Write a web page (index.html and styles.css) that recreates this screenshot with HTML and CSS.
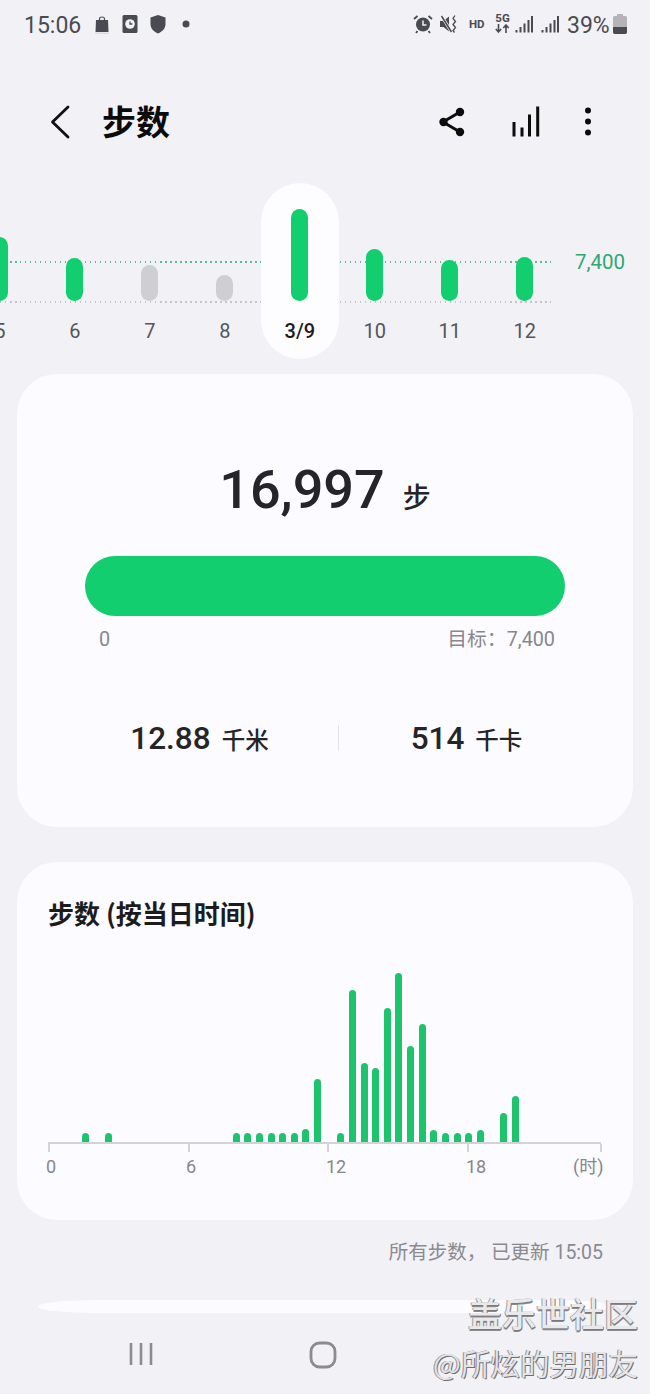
FILE: index.html
```html
<!DOCTYPE html>
<html lang="zh-CN">
<head>
<meta charset="utf-8">
<title>步数</title>
<link rel="stylesheet" href="styles.css">
</head>
<body>
<div class="screen">
  <header class="status">
    <div class="status-left">
      <span class="time">15:06</span>
      <svg class="s-cell" viewBox="0 0 28 20"><path d="M8 6h12l.5 12h-13z" fill="#4a4a52"/><path d="M11.5 6V5a2.500 2 0 0 1 5 0v1" fill="none" stroke="#4a4a52" stroke-width="1.200"/><path d="M7 19.300h14" stroke="#d6d6da" stroke-width="1.200"/></svg>
      <svg class="s-cell" viewBox="0 0 28 20"><rect x="6.500" y="1" width="15" height="18" rx="1.500" fill="#4a4a52"/><circle cx="14" cy="10" r="4.800" fill="#f1f1f6"/><path d="M14 7.500V10h2.400" fill="none" stroke="#4a4a52" stroke-width="1.300"/></svg>
      <svg class="s-cell" viewBox="0 0 28 20"><path d="M14 1l7.500 2.500V10c0 4.500-3 7.500-7.500 9.500C9.500 17.500 6.500 14.500 6.500 10V3.500z" fill="#4a4a52"/></svg>
      <svg class="s-cell" viewBox="0 0 28 20"><circle cx="14" cy="10" r="3.500" fill="#4a4a52"/></svg>
    </div>
    <div class="status-right">
      <svg class="s-alarm" viewBox="0 0 20 20"><circle cx="10" cy="10.500" r="7" fill="#4a4a52"/><path d="M10 6.500v4.500h3.500" fill="none" stroke="#f1f1f6" stroke-width="1.500"/><path d="M1 5l3.500-3M19 5l-3.500-3M4.500 17l-1.500 2M15.500 17l1.500 2" stroke="#4a4a52" stroke-width="1.800" fill="none"/></svg>
      <svg class="s-mute" viewBox="0 0 18 20"><path d="M0 7h3.500L9 2.500v15L3.500 13H0z" fill="#4a4a52"/><path d="M1 1l10.500 17" stroke="#f1f1f6" stroke-width="3"/><path d="M1.500 2l10 16" stroke="#4a4a52" stroke-width="1.500"/><path d="M15 1.500l-2 3 2.500 3-2.500 3 2.500 3-2.500 3 1.500 2" fill="none" stroke="#4a4a52" stroke-width="1.300"/></svg>
      <span class="s-hd">HD</span>
      <span class="s-net"><span class="s-5g">5G</span><svg class="s-arrows" viewBox="0 0 15 9"><path d="M3.500 0v7.500M.8 5l2.700 3 2.700-3M11 9V1.500M8.300 4L11 1l2.700 3" fill="none" stroke="#4a4a52" stroke-width="1.600"/></svg></span>
      <svg class="s-signal" viewBox="0 0 18 18"><path d="M1.500 15v2.500M5.500 12v5.500M9.500 8.500v9M13.500 5v12.500M17 1v16.500" stroke="#4a4a52" stroke-width="2"/></svg>
      <svg class="s-signal s-signal-b" viewBox="0 0 18 18"><path d="M1.500 15v2.500M5.500 12v5.500M9.500 8.500v9M13.500 5v12.500M17 1v16.500" stroke="#4a4a52" stroke-width="2"/></svg>
      <span class="pct">39%</span>
      <svg class="s-batt" viewBox="0 0 14 20"><path d="M4 0h6v2h2.500A1.500 1.500 0 0 1 14 3.500V18a2 2 0 0 1-2 2H2a2 2 0 0 1-2-2V3.500A1.500 1.500 0 0 1 1.500 2H4z" fill="#b4b4b8"/><path d="M0 13h14v5a2 2 0 0 1-2 2H2a2 2 0 0 1-2-2z" fill="#4a4a52"/></svg>
    </div>
  </header>

  <nav class="appbar">
    <svg class="ic-back" viewBox="0 0 24 40"><path d="M20 5L4.500 20 20 35" fill="none" stroke="#111" stroke-width="2.800" stroke-linecap="round" stroke-linejoin="round"/></svg>
    <h1 class="title">步数</h1>
    <svg class="ic-share" viewBox="0 0 30 40"><path d="M23 10L6 20l17 10" fill="none" stroke="#0c0c0c" stroke-width="3"/><circle cx="23" cy="10" r="4.200" fill="#0c0c0c"/><circle cx="6.500" cy="20" r="4.200" fill="#0c0c0c"/><circle cx="23" cy="30" r="4.200" fill="#0c0c0c"/></svg>
    <svg class="ic-bars" viewBox="0 0 32 40"><path d="M4 20v14.500M12 25.500v9M19.500 12.500v22M27.700 4.500v30" fill="none" stroke="#0c0c0c" stroke-width="3"/></svg>
    <svg class="ic-more" viewBox="0 0 20 40"><circle cx="10" cy="8.500" r="3" fill="#0c0c0c"/><circle cx="10" cy="19.500" r="3" fill="#0c0c0c"/><circle cx="10" cy="30.500" r="3" fill="#0c0c0c"/></svg>
  </nav>

  <section class="strip">
    <div class="goal-line"></div>
    <div class="base-line"></div>
    <span class="goal-label">7,400</span>
    <div class="days">
      <div class="day"><div class="day-plot"><div class="day-bar" style="height:64px"></div></div><span class="day-label">5</span></div>
      <div class="day"><div class="day-plot"><div class="day-bar" style="height:43px"></div></div><span class="day-label">6</span></div>
      <div class="day"><div class="day-plot"><div class="day-bar day-bar-off" style="height:36px"></div></div><span class="day-label">7</span></div>
      <div class="day"><div class="day-plot"><div class="day-bar day-bar-off" style="height:26px"></div></div><span class="day-label">8</span></div>
      <div class="day day-active"><div class="day-plot"><div class="day-bar" style="height:92px"></div></div><span class="day-label">3/9</span></div>
      <div class="day"><div class="day-plot"><div class="day-bar" style="height:52px"></div></div><span class="day-label">10</span></div>
      <div class="day"><div class="day-plot"><div class="day-bar" style="height:41px"></div></div><span class="day-label">11</span></div>
      <div class="day"><div class="day-plot"><div class="day-bar" style="height:44px"></div></div><span class="day-label">12</span></div>
    </div>
  </section>

  <main class="card card-summary">
    <div class="total"><span class="total-num">16,997</span><span class="total-unit">步</span></div>
    <div class="progress"></div>
    <div class="range"><span>0</span><span>目标：7,400</span></div>
    <div class="stats">
      <div class="stat"><span class="stat-num">12.88</span><span class="stat-unit">千米</span></div>
      <div class="stat-div"></div>
      <div class="stat"><span class="stat-num">514</span><span class="stat-unit">千卡</span></div>
    </div>
  </main>

  <section class="card card-hours">
    <h2 class="hours-title">步数 (按当日时间)</h2>
    <div class="hours-plot">
      <i class="hb"></i><i class="hb"></i><i class="hb" style="height:9px"></i><i class="hb"></i><i class="hb" style="height:9px"></i><i class="hb"></i><i class="hb"></i><i class="hb"></i><i class="hb"></i><i class="hb"></i><i class="hb"></i><i class="hb"></i><i class="hb"></i><i class="hb"></i><i class="hb"></i>
      <i class="hb" style="height:9px"></i><i class="hb" style="height:9px"></i><i class="hb" style="height:9px"></i><i class="hb" style="height:9px"></i><i class="hb" style="height:9px"></i><i class="hb" style="height:9px"></i><i class="hb" style="height:13px"></i><i class="hb" style="height:63px"></i><i class="hb"></i><i class="hb" style="height:9px"></i><i class="hb" style="height:152px"></i><i class="hb" style="height:79px"></i><i class="hb" style="height:74px"></i><i class="hb" style="height:134px"></i><i class="hb" style="height:169px"></i><i class="hb" style="height:96px"></i><i class="hb" style="height:118px"></i><i class="hb" style="height:12px"></i><i class="hb" style="height:9px"></i><i class="hb" style="height:9px"></i><i class="hb" style="height:9px"></i><i class="hb" style="height:12px"></i><i class="hb"></i><i class="hb" style="height:29px"></i><i class="hb" style="height:46px"></i>
    </div>
    <div class="axis">
      <div class="tick"></div><div class="tick"></div><div class="tick"></div><div class="tick"></div><div class="tick tick-end"></div>
    </div>
    <div class="axis-labels">
      <span class="al al-0">0</span><span class="al al-6">6</span><span class="al al-12">12</span><span class="al al-18">18</span><span class="al al-h">(时)</span>
    </div>
  </section>

  <p class="updated">所有步数， 已更新 15:05</p>
  <div class="sliver"></div>

  <footer class="navbar">
    <svg class="nav-recent" viewBox="0 0 24 24"><path d="M2 1v22M12 1v22M22 1v22" stroke="#8b8b90" stroke-width="2.600" fill="none"/></svg>
    <svg class="nav-home" viewBox="0 0 28 28"><rect x="2" y="2" width="24" height="24" rx="8.500" fill="none" stroke="#8b8b90" stroke-width="2.800"/></svg>
  </footer>

  <div class="watermark">
    <div class="wm-a">盖乐世社区</div>
    <div class="wm-b">@所炫的男朋友</div>
  </div>
</div>
</body>
</html>
```

FILE: styles.css
```css
* { box-sizing: border-box; }
html, body { margin: 0; padding: 0; }
body { background: #f1f1f6; font-family: Roboto, "Noto Sans CJK SC", sans-serif; }
.screen { position: relative; width: 650px; height: 1394px; overflow: hidden; background: #f1f1f6; }

.status { height: 50px; display: flex; align-items: center; justify-content: space-between; padding: 0 23px 0 24px; color: #4a4a52; }
.status-left, .status-right { display: flex; align-items: center; }
.time { font-size: 23px; width: 64px; }
.s-cell { width: 28px; height: 20px; display: block; margin-top: -2px; }
.s-alarm { width: 20px; height: 20px; margin-top: -2px; }
.s-mute { width: 18px; height: 20px; margin: -2px 0 0 7px; }
.s-hd { font-size: 11.500px; font-weight: 700; width: 17px; margin: -2px 0 0 11px; white-space: nowrap; }
.s-net { display: flex; flex-direction: column; align-items: center; width: 15px; margin: -4px 0 0 9px; }
.s-5g { font-size: 11.500px; font-weight: 700; line-height: 11px; }
.s-arrows { width: 15px; height: 9px; display: block; }
.s-signal { width: 18px; height: 18px; margin: -2px 0 0 5px; }
.s-signal-b { margin-left: 8px; }
.pct { font-size: 23px; margin-left: 8px; width: 46px; }
.s-batt { width: 14px; height: 20px; margin: -2px 0 0 0; }

.appbar { height: 133px; display: flex; align-items: flex-start; padding: 51px 52px 0 48px; }
.ic-back { width: 24px; height: 40px; flex: none; margin-top: 1px; }
.title { margin: 0 0 0 30px; font: 700 34px/40px "Noto Sans CJK SC", sans-serif; color: #0b0b0b; flex: none; }
.ic-share { width: 30px; height: 40px; margin: 1px 0 0 auto; flex: none; }
.ic-bars { width: 32px; height: 40px; margin: 1px 0 0 43px; flex: none; }
.ic-more { width: 20px; height: 40px; margin: 1px 0 0 36px; flex: none; }

.strip { position: relative; height: 176px; }
.goal-line, .base-line { position: absolute; left: 0; width: 551px; height: 1.500px; }
.goal-line { top: 78px; background: repeating-linear-gradient(to right, #5dbb92 0 1.500px, transparent 1.500px 5px); }
.base-line { top: 118px; background: repeating-linear-gradient(to right, #c4c4c9 0 1.500px, transparent 1.500px 5px); }
.goal-label { position: absolute; left: 575px; top: 66px; font-size: 20.500px; line-height: 26px; color: #2fa872; }
.days { position: relative; display: flex; margin-left: -37.700px; width: 600px; }
.day { position: relative; width: 75px; height: 176px; display: flex; flex-direction: column; align-items: center; }
.day-active::before { content: ""; position: absolute; inset: 0 -1.700px 0 -1.300px; background: #fdfdff; border-radius: 39px; }
.day-plot { position: relative; height: 118px; display: flex; align-items: flex-end; }
.day-bar { width: 17px; background: #13ce6e; border-radius: 8.500px; }
.day-bar-off { background: #cfcfd3; }
.day-label { position: relative; margin-top: 18px; font-size: 20px; line-height: 24px; color: #55555b; }
.day-active .day-label { color: #1c1c1e; font-weight: 500; }

.card { margin: 0 17px; background: #fcfbff; border-radius: 40px; }
.card-summary { height: 453px; margin-top: 15px; padding: 84px 68px 0; }
.total { display: flex; justify-content: center; align-items: baseline; height: 64px; line-height: 64px; color: #252528; }
.total-num { font-size: 54px; font-weight: 500; }
.total-unit { font: 500 28px "Noto Sans CJK SC", sans-serif; margin-left: 18px; }
.progress { height: 60px; margin-top: 34px; background: #13ce6e; border-radius: 30px; }
.range { display: flex; justify-content: space-between; padding: 0 10px 0 14px; margin-top: 11px; font-size: 19.800px; line-height: 25px; color: #87878c; }
.stats { display: grid; grid-template-columns: 277px 1px 255px; align-items: center; margin: 66px 0 0 -24px; height: 40px; width: 533px; }
.stat { display: flex; justify-content: center; align-items: baseline; color: #252528; }
.stat-num { font-size: 31.500px; font-weight: 500; }
.stat-unit { font: 500 23.500px "Noto Sans CJK SC", sans-serif; margin-left: 11px; }
.stat-div { width: 1px; height: 26px; background: #e3e3e8; }

.card-hours { height: 358px; margin-top: 35px; padding: 34px 32px 0 31px; position: relative; }
.hours-title { margin: 0; font: 700 26px/34px "Noto Sans CJK SC", Roboto, sans-serif; color: #1c1c1e; white-space: nowrap; }
.hours-plot { display: flex; align-items: flex-end; height: 180px; margin-top: 32px; padding-left: 8px; }
.hb { display: block; flex: none; width: 7px; height: 0; background: #1ec46c; border-radius: 3.500px 3.500px 0 0; margin: 0 2.325px; }
.axis { display: flex; gap: 137.500px; height: 10px; border-top: 2px solid #d2d2d7; width: 553px; }
.tick { width: 2px; height: 8px; background: #d2d2d7; flex: none; }
.tick-end { margin-left: -6.500px; }
.axis-labels { position: relative; height: 26px; font-size: 18px; line-height: 26px; color: #86868b; }
.al { position: absolute; top: 2px; }
.al-0 { left: -2px; }
.al-6 { left: 138px; }
.al-12 { left: 278px; }
.al-18 { left: 418px; }
.al-h { left: 525px; }

.updated { margin: 19px 47px 0 0; text-align: right; font: 400 19.500px/28px Roboto, "Noto Sans CJK SC", sans-serif; color: #8a8a8f; }
.sliver { height: 13px; margin: 33px 38px 0 38px; background: #fcfbff; border-radius: 60px / 7px; }
.navbar { position: relative; height: 81px; display: flex; align-items: flex-start; padding: 29px 0 0 129px; }
.nav-recent { width: 24px; height: 24px; flex: none; }
.nav-home { width: 28px; height: 28px; flex: none; margin: -1px 0 0 156px; }

.watermark { position: absolute; right: 12px; top: 1293px; text-align: right; font-family: "Noto Sans CJK SC", sans-serif; white-space: nowrap; }
.wm-a { font-size: 34px; line-height: 40px; font-weight: 500; color: #e9e9ec; text-shadow: 1px 1px 0 #7a7a7e, 0 2px 0 #8a8a8e, -1px 0 0 #a0a0a4; }
.wm-b { font-size: 29.500px; line-height: 40px; margin-top: 9px; color: #e4e4e7; text-shadow: 1px 1px 0 #6e6e72, -1px 0 0 #8e8e92; }
```
